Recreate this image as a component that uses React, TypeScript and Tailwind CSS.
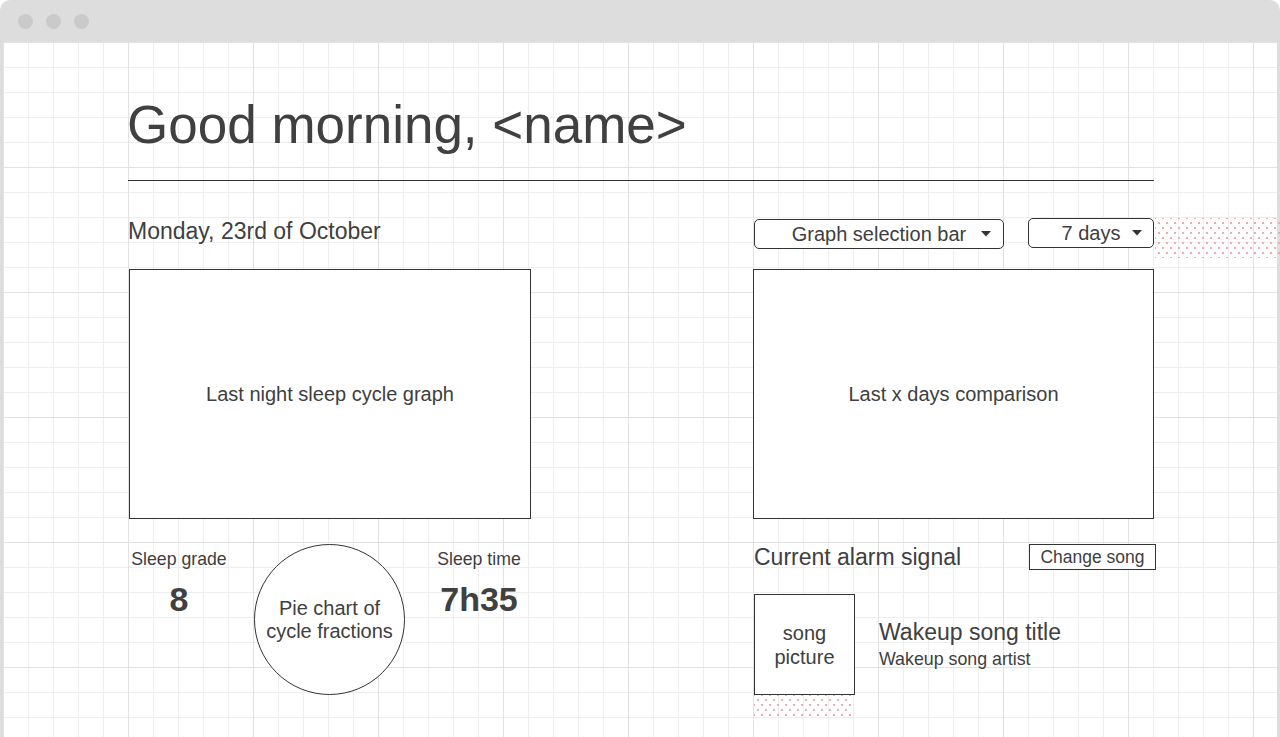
import React from "react";

const Caret = ({ className }: { className: string }) => (
  <svg
    className={`absolute top-1/2 -translate-y-1/2 ${className}`}
    width="10"
    height="6"
    viewBox="0 0 10 6"
  >
    <polygon points="0,0 10,0 5,5.5" fill="#333333" />
  </svg>
);

const Dots = ({ className }: { className: string }) => (
  <div
    className={`absolute bg-[image:radial-gradient(circle,#f2aaaa_0.7px,transparent_1.1px),radial-gradient(circle,#f2aaaa_0.7px,transparent_1.1px)] bg-[size:8px_10px,8px_10px] bg-[position:0_0,4px_5px] ${className}`}
  />
);

const App = () => {
  return (
    <div className="h-screen w-full overflow-hidden bg-white font-['Liberation_Sans',Arial,sans-serif] text-[#404040]">
      <div className="flex h-full flex-col rounded-t-[10px] bg-[#dddddd] px-[3px]">
        {/* window bar */}
        <div className="flex h-[42px] shrink-0 items-center gap-[13px] pl-[15px] pt-px">
          <span className="size-[15px] rounded-full bg-[#cacaca]"></span>
          <span className="size-[15px] rounded-full bg-[#cacaca]"></span>
          <span className="size-[15px] rounded-full bg-[#cacaca]"></span>
        </div>

        {/* canvas */}
        <div className="flex-1 bg-white bg-[image:linear-gradient(to_right,#e2e2e2_1px,transparent_1px),linear-gradient(to_bottom,#e2e2e2_1px,transparent_1px),linear-gradient(to_right,#eeeeee_1px,transparent_1px),linear-gradient(to_bottom,#eeeeee_1px,transparent_1px)] bg-[size:125px_125px,125px_125px,25px_25px,25px_25px]">
          <div className="ml-[125px] w-[1026px]">
            <h1 className="-ml-px pt-[56px] text-[53px] leading-[53px] font-normal">
              Good morning, &lt;name&gt;
            </h1>
            <div className="mt-[29px] h-px bg-[#333333]"></div>

            <div className="mt-[37px] grid grid-cols-[403px_401px] gap-x-[222px]">
              {/* left column */}
              <div>
                <div className="h-[30px]">
                  <p className="text-[23px] leading-[27px]">Monday, 23rd of October</p>
                </div>
                <div className="mt-[21px] ml-px flex h-[250px] w-[402px] items-center justify-center border border-[#333333] bg-white text-[20px]">
                  Last night sleep cycle graph
                </div>
                <div className="mt-[25px] ml-px flex items-start">
                  <div className="w-[100px] text-center">
                    <p className="pt-[4px] text-[17.7px] leading-[22px]">Sleep grade</p>
                    <p className="mt-[12px] text-[34px] leading-[34px] font-bold">8</p>
                  </div>
                  <div className="ml-[25px] flex size-[151px] items-center justify-center rounded-full border border-[#333333] bg-white text-center text-[20px] leading-[23px]">
                    Pie chart of
                    <br />
                    cycle fractions
                  </div>
                  <div className="ml-[24px] w-[100px] text-center">
                    <p className="pt-[4px] text-[17.7px] leading-[22px]">Sleep time</p>
                    <p className="mt-[12px] text-[34px] leading-[34px] font-bold">7h35</p>
                  </div>
                </div>
              </div>

              {/* right column */}
              <div>
                <div className="relative flex h-[30px]">
                  <div className="relative mt-px ml-px flex h-[30px] w-[250px] items-center justify-center rounded-[5px] border border-[#333333] bg-white text-[20px] leading-[28px]">
                    Graph selection bar
                    <Caret className="right-[12px]" />
                  </div>
                  <div className="relative ml-[24px] flex h-[30px] w-[126px] items-center justify-center rounded-[5px] border border-[#333333] bg-white text-[20px] leading-[28px]">
                    7 days
                    <Caret className="right-[11px]" />
                  </div>
                  <Dots className="top-0 left-[402px] h-[40px] w-[125px]" />
                </div>
                <div className="mt-[21px] flex h-[250px] w-[401px] items-center justify-center border border-[#333333] bg-white text-[20px]">
                  Last x days comparison
                </div>
                <div className="mt-[25px] flex items-start">
                  <p className="pl-px text-[23px] leading-[26px]">Current alarm signal</p>
                  <button className="-mr-[2px] ml-auto h-[26px] w-[127px] border border-[#333333] bg-white text-center text-[17.5px] leading-[24px] text-[#404040]">
                    Change song
                  </button>
                </div>
                <div className="mt-[24px] ml-px flex items-center">
                  <div className="relative flex h-[101px] w-[101px] shrink-0 items-center justify-center border border-[#333333] bg-white text-center text-[20px] leading-[24px]">
                    song
                    <br />
                    picture
                    <Dots className="top-[calc(100%+1px)] left-[-1px] h-[21px] w-[99px]" />
                  </div>
                  <div className="ml-[24px]">
                    <p className="text-[23px] leading-[26px]">Wakeup song title</p>
                    <p className="mt-[3px] text-[17.8px] leading-[22px]">Wakeup song artist</p>
                  </div>
                </div>
              </div>
            </div>
          </div>
        </div>
      </div>
    </div>
  );
};

export default App;
